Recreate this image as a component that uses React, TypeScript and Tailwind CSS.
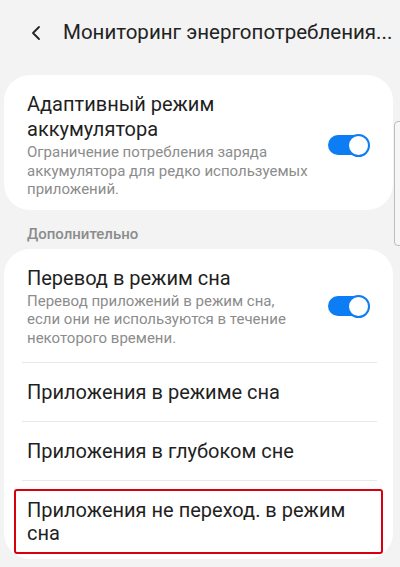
import { ChevronLeft } from 'lucide-react';

function Toggle() {
  return (
    <div className="relative w-[42px] h-[23px] shrink-0">
      <div className="absolute left-0 top-[1.5px] w-[40px] h-[20px] rounded-full bg-[#0d7df4]" />
      <div className="absolute right-0 top-0 w-[23px] h-[23px] rounded-full bg-white border-2 border-[#0d7df4]" />
    </div>
  );
}

function ToggleRow({ title, desc }: { title: string[]; desc: string[] }) {
  return (
    <div className="flex items-center pl-[23px] pr-[23px]">
      <div className="flex-1">
        <div className="text-[20px] leading-[25px] text-[#1f1f1f]">
          {title.map((t) => (
            <div key={t}>{t}</div>
          ))}
        </div>
        <div className="mt-[1px] text-[15px] leading-[18.5px] text-[#8c8c8c]">
          {desc.map((d) => (
            <div key={d}>{d}</div>
          ))}
        </div>
      </div>
      <Toggle />
    </div>
  );
}

export default function App() {
  return (
    <div
      className="relative w-[400px] h-[567px] overflow-hidden bg-[#f3f3f3]"
      style={{ fontFamily: 'Roboto, "Noto Sans", sans-serif' }}
    >
      {/* Header */}
      <div className="flex items-center h-[64px] pl-[24px] pt-[1px]">
        <ChevronLeft className="w-[24px] h-[24px] text-[#222]" strokeWidth={1.8} />
        <div className="ml-[15px] text-[20.5px] text-[#222] whitespace-nowrap">
          Мониторинг энергопотребления...
        </div>
      </div>

      {/* Card 1 */}
      <div className="mx-[4px] mt-[11px] w-[389px] bg-white rounded-[26px] pt-[17px] pb-[11px]">
        <ToggleRow
          title={['Адаптивный режим', 'аккумулятора']}
          desc={['Ограничение потребления заряда', 'аккумулятора для редко используемых', 'приложений.']}
        />
      </div>

      <div className="pl-[27px] mt-[14px] text-[15px] leading-[20px] font-medium text-[#8c8c8c]">
        Дополнительно
      </div>

      {/* Card 2 */}
      <div className="mx-[4px] mt-[5px] w-[389px] bg-white rounded-[26px] pt-[17px] pb-[5px]">
        <ToggleRow
          title={['Перевод в режим сна']}
          desc={['Перевод приложений в режим сна,', 'если они не используются в течение', 'некоторого времени.']}
        />
        <div className="ml-[18px] mr-[16px] mt-[15px] h-[1px] bg-[#e8e8e8]" />
        <div className="pl-[23px] h-[58px] flex items-center text-[20px] text-[#1f1f1f]">
          Приложения в режиме сна
        </div>
        <div className="ml-[18px] mr-[16px] h-[1px] bg-[#e8e8e8]" />
        <div className="pl-[23px] h-[58px] flex items-center text-[20px] text-[#1f1f1f]">
          Приложения в глубоком сне
        </div>
        <div className="ml-[18px] mr-[16px] h-[1px] bg-[#e8e8e8]" />
        <div className="mx-[10px] mt-[8px] border-2 border-[#d9000d] rounded-[3px] pl-[11px] pt-[8px] pb-[7px] text-[20px] leading-[23px] text-[#1f1f1f]">
          <div>Приложения не переход. в режим</div>
          <div>сна</div>
        </div>
      </div>

      {/* Scrollbar */}
      <div className="absolute left-[394px] top-[121px] w-[10px] h-[125px] rounded-[4px] border border-[#bdbdbd] bg-[#f6f6f6]" />
    </div>
  );
}
